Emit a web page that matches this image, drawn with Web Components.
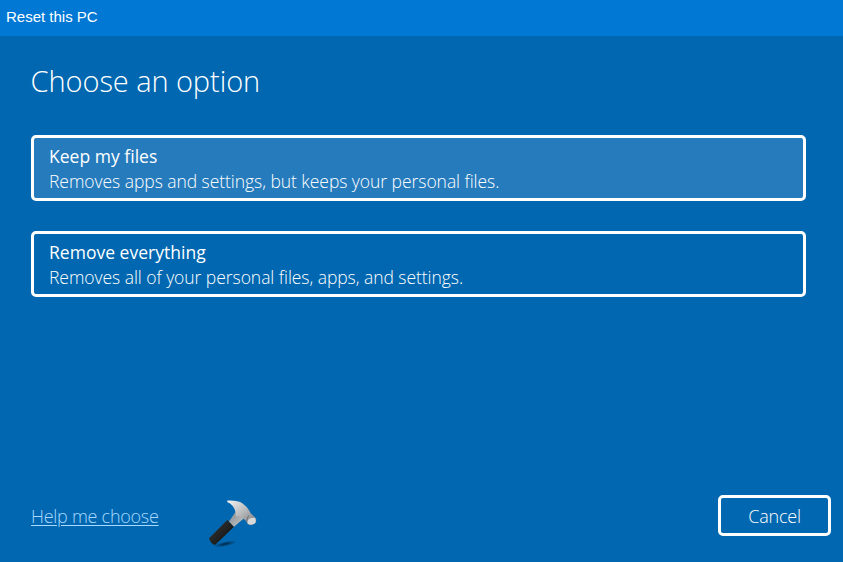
<!DOCTYPE html>
<html><head><meta charset="utf-8"><style>
html,body{margin:0;padding:0;height:100%}
body{background:#0067b0;font-family:"Open Sans",sans-serif;color:#fff;overflow:hidden}
</style></head><body>
<reset-dialog>
  <span slot="title">Reset this PC</span>
  <span slot="heading">Choose an option</span>
  <option-card active><span slot="name">Keep my files</span><span>Removes apps and settings, but keeps your personal files.</span></option-card>
  <option-card><span slot="name">Remove everything</span><span>Removes all of your personal files, apps, and settings.</span></option-card>
</reset-dialog>
<script>
class ResetDialog extends HTMLElement{constructor(){super();this.attachShadow({mode:'open'}).innerHTML=`<style>
:host{display:flex;flex-direction:column;height:562px;box-sizing:border-box}
header{height:36px;flex:none;background:#0078d4;font:15px/34px "Liberation Sans",sans-serif;padding-left:6px}
main{flex:1;display:flex;flex-direction:column;padding:26px 12px 26px 31px}
h1{margin:0;font:300 29px/38px "Open Sans",sans-serif;letter-spacing:-.08px;text-indent:-.4px}
.cards{display:flex;flex-direction:column;gap:30px;margin:35px 25px 0 0}
footer{margin-top:auto;height:41px;display:flex;align-items:center}
a{color:#a8d9ff;font:300 18px/24px "Open Sans",sans-serif;letter-spacing:-.27px;text-decoration:underline;text-underline-offset:2px}
svg{margin:17px 0 0 46px;width:54px;height:54px;flex:none}
button{margin-left:auto;width:113px;height:41px;box-sizing:border-box;border:3px solid #fff;border-radius:5px;background:none;color:#fff;font:300 18px "Open Sans",sans-serif;letter-spacing:-.2px;padding:0}
</style>
<header><slot name="title"></slot></header>
<main><h1><slot name="heading"></slot></h1>
<div class="cards"><slot></slot></div>
<footer><a>Help me choose</a>
<svg viewBox="0 0 54 54" aria-hidden="true"><defs>
<linearGradient id="h" x1="0" y1="0" x2="1" y2="1"><stop offset="0" stop-color="#f4f4f4"/><stop offset=".5" stop-color="#b8babc"/><stop offset="1" stop-color="#74777a"/></linearGradient>
<linearGradient id="m" x1="0" y1="0" x2="1" y2="1"><stop offset="0" stop-color="#85888b"/><stop offset="1" stop-color="#c8cacb"/></linearGradient>
<linearGradient id="g" x1="0" y1="0" x2="1" y2="1"><stop offset="0" stop-color="#3c3c3c"/><stop offset="1" stop-color="#0a0a0a"/></linearGradient>
<radialGradient id="s"><stop offset="0" stop-color="#00203a" stop-opacity=".9"/><stop offset="1" stop-color="#00203a" stop-opacity="0"/></radialGradient>
<filter id="b" x="-10%" y="-10%" width="120%" height="120%"><feGaussianBlur stdDeviation=".4"/></filter></defs>
<ellipse cx="20" cy="47" rx="12" ry="2.500" fill="url(#s)" transform="rotate(-12 20 47)"/>
<g filter="url(#b)" transform="translate(-1 0)">
<path d="M5 41.300 L23.300 23 L30 29.700 L11 48 Q7 47.500 5 41.300 Z" fill="url(#g)"/>
<path d="M25 24.500 L31.700 14.700 L40 21.300 L30 29.700 Z" fill="url(#m)"/>
<path d="M23.300 3.500 Q34 3 38.300 6.300 Q44 10 46.700 16.300 L52 21.300 Q53 25 50.500 26.800 Q46 29 43.500 26.500 L42 24 Q37 19 31.700 19 Q32 9 23.300 5 Z" fill="url(#h)"/>
<path d="M44 23 Q47 20 51 21 Q53 25 50.500 26.800 Q46 29 43.500 26.500 Z" fill="#d6d8d9"/>
<path d="M44.500 18.500 L42.500 24" stroke="#6f7275" stroke-width="1" fill="none"/>
</g></svg>
<button>Cancel</button></footer></main>`}}
class OptionCard extends HTMLElement{constructor(){super();this.attachShadow({mode:'open'}).innerHTML=`<style>
:host{display:block;height:66px;box-sizing:border-box;border:3px solid #fff;border-radius:5px;padding:6px 15px 0;font:300 17.500px/25px "Open Sans",sans-serif;letter-spacing:-.05px}
:host([active]){background:#267bbd}
.n{font-weight:500;font-size:17.500px;letter-spacing:.02px;line-height:25px}
.d{color:#fff;line-height:25px}
</style><div class="n"><slot name="name"></slot></div><div class="d"><slot></slot></div>`}}
customElements.define('reset-dialog',ResetDialog);customElements.define('option-card',OptionCard);
</script></body></html>
